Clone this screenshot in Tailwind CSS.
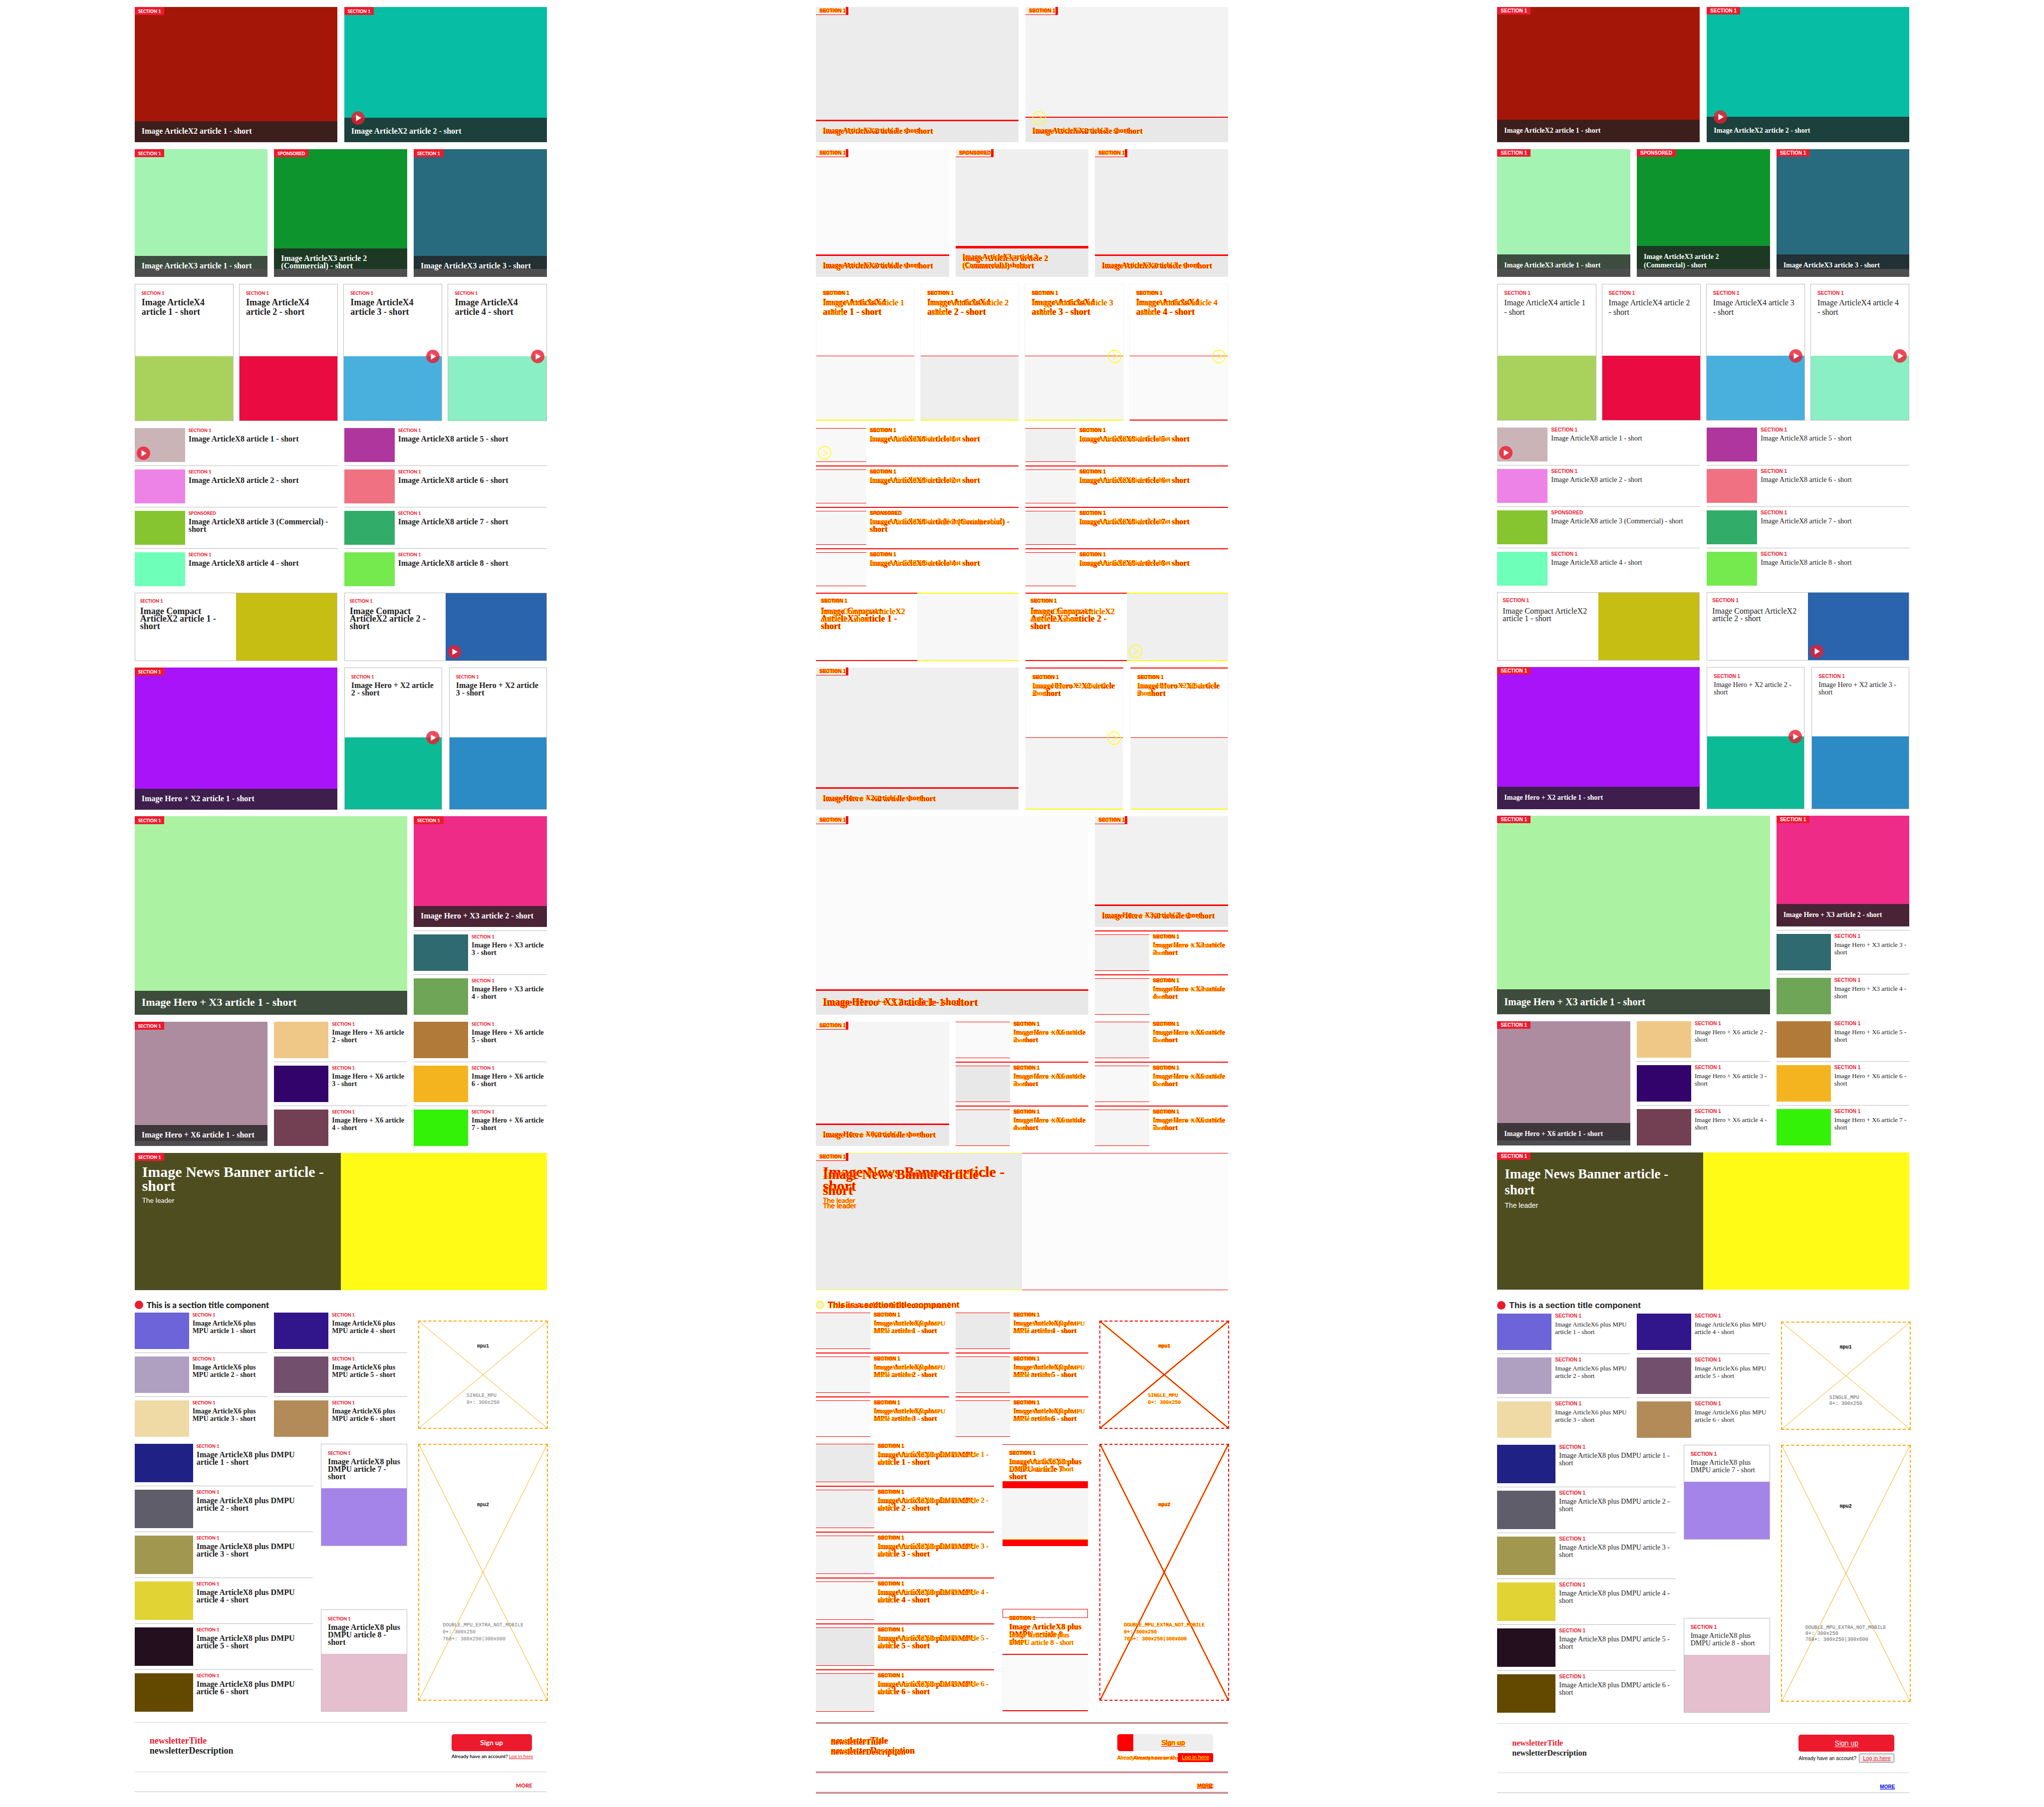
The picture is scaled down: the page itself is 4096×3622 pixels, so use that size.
<!DOCTYPE html>
<html lang="en">
<head>
<meta charset="utf-8">
<title>Edition slices: baseline, difference, current</title>
<script src="https://cdn.jsdelivr.net/npm/@tailwindcss/browser@4"></script>
</head>
<body class="bg-white text-[#222]">
<main id="panels" class="flex w-full items-stretch"></main>

<script>
// Each panel draws the same slices. L: baseline fonts, R: fallback fonts, D: difference of the two.
const NOTE = 'text-[#f00] [text-shadow:1px_0_0_#ff0,-1px_0_0_#ff0]';
const SANS = { L: "font-[Lato,sans-serif]", R: "font-['Liberation_Sans',sans-serif]" };
const SERIF = "font-['Liberation_Serif',serif]";
const LABEL = {
  L: "font-[Lato,sans-serif] font-black text-[9px]",
  R: "font-['Liberation_Sans',sans-serif] font-bold text-[10px]"
};
const TYPE = {
  caption: { L: 'font-bold text-[16px] leading-[15px]', R: 'font-bold text-[14px] leading-[17px]' },
  lead:    { L: 'font-bold text-[22px] leading-[21px]', R: 'font-bold text-[20px] leading-[22px]' },
  tall:    { L: 'font-bold text-[18px] leading-[19px]', R: 'text-[16px] leading-[19px]' },
  compact: { L: 'font-bold text-[18px] leading-[15px]', R: 'text-[16px] leading-[15px]' },
  row:     { L: 'font-bold text-[16px] leading-[15px]', R: 'text-[14px] leading-[15px]' },
  small:   { L: 'font-bold text-[14px] leading-[15px]', R: 'text-[13px] leading-[15px]' },
  banner:  { L: 'font-bold text-[30px] leading-[28px]', R: 'font-bold text-[27px] leading-[32px]' },
  news:    { L: 'font-bold text-[18px] leading-[20px]', R: 'font-bold text-[16px] leading-[20px]' }
};

function panel(m) {
  const D = m === 'D';
  const by = (l, r, d) => m === 'L' ? l : m === 'R' ? r : d;

  const tone = hex => {
    if (!D) return '#' + hex;
    const [r, g, b] = [0, 2, 4].map(i => parseInt(hex.slice(i, i + 2), 16));
    const v = Math.round(255 + (0.299 * r + 0.587 * g + 0.114 * b - 255) * 0.1);
    return `rgb(${v},${v},${v})`;
  };
  const image = (hex, cls, inner = '') => `<div class="${cls}" style="background-color:${tone(hex)}">${inner}</div>`;

  // Both versions share one grid cell in the difference panel.
  const both = (draw, align = 'items-start') => D
    ? `<div class="grid ${align}"><div class="[grid-area:1/1] ${NOTE}">${draw('L')}</div><div class="[grid-area:1/1] ${NOTE}">${draw('R')}</div></div>`
    : draw(m);

  const label = (text = 'Section 1') => both(v => `<p class="${LABEL[v]} uppercase leading-[9px] whitespace-nowrap ${D ? '' : 'text-[#ed1a2e]'}">${text}</p>`);
  const title = (kind, text, align) => both(v => `<h3 class="${SERIF} ${TYPE[kind][v]}">${text}</h3>`, align);

  const tag = (text = 'Section 1') => `<div class="absolute left-0 top-0 ${by('h-4 bg-[#ed1a2e] px-[7px] text-white', 'h-[15px] bg-[#ed1a2e] px-[7px] text-white', 'h-4 border-b border-r-[5px] border-[#f00] bg-[#eee] pl-[7px]')} flex items-center">${both(v => `<p class="${LABEL[v]} uppercase leading-[9px] whitespace-nowrap">${text}</p>`)}</div>`;

  const play = cls => `<svg class="absolute ${cls} size-[27px]" viewBox="0 0 27 27" role="img" aria-label="Video">${D
    ? '<circle cx="13.5" cy="13.5" r="12.7" fill="none" stroke="#ff0" stroke-width="1.5"/><path d="M10 7.5 19 13.5 10 19.5" fill="none" stroke="#ff0" stroke-width="1.5"/>'
    : '<circle cx="13.5" cy="13.5" r="13.5" fill="#ed1a2e" fill-opacity=".8"/><path d="M9.5 7.3V19.7L20 13.5Z" fill="#fff"/>'}</svg>`;

  const caption = (text, kind = 'caption', video = false, deep = false) => `<div class="absolute inset-x-0 bottom-0 ${D ? 'bg-[#e8e8e8]' : 'bg-[#222]/80 text-white'} ${kind === 'lead'
      ? by('pt-[12px] pb-[15px]', 'pt-[14px] pb-[14px]', 'pt-[11px] pb-[15px] border-t-[3px] border-[#f00]')
      : video ? by('pt-[19px] pb-[15px]', 'pt-[19px] pb-[15px]', 'pt-[17px] pb-[15px] border-t-2 border-[#f00]')
      : deep ? by('pt-[12px] pb-[15px]', 'pt-[13px] pb-[15px]', 'pt-[8px] pb-[15px] border-t-[5px] border-[#f00]')
      : by('pt-[12px] pb-[15px]', 'pt-[13px] pb-[15px]', 'pt-[10px] pb-[15px] border-t-[3px] border-[#f00]')} pl-[14px] pr-[24px]">
      ${video ? play('left-[14px] -top-[13px]') : ''}${title(kind, text, 'items-end')}</div>`;

  const hero = (hex, text, o = {}) => `<article class="relative ${o.cls || ''} ${o.strip ? (D ? 'bg-[#eee]' : 'bg-white') : ''}">
      ${image(hex, o.img || 'h-full')}${tag(o.tag)}${caption(text, o.kind, o.video, o.deep)}</article>`;

  // The 2px difference rule hangs 1px below its slot so the rows keep their pitch.
  const rule = D ? '-mb-px h-[2px] border-t-2 border-[#f00]' : 'h-px border-t border-[#bbb]';
  const rowItem = (kind, hex, text, o = {}) => `<article class="flex gap-[7px]">
      ${image(hex, `relative shrink-0 ${o.img} ${D ? 'border-y border-[#f00]' : ''}`, o.video ? play('left-1 bottom-1') : '')}
      <div class="min-w-0 flex-1">${label(o.tag)}<div class="mt-[5px]">${title(kind, text)}</div></div></article>`;
  const rows = (kind, img, items) => `<div class="flex flex-col gap-[7px]">${items.map(i =>
      rowItem(kind, i[0], i[1], { img, ...(i[2] || {}) })).join(`<hr class="${rule}">`)}</div>`;

  const edge = D ? 'border-[#f4f4f4]' : 'border-[#bbb]';
  const card = (kind, hex, text, o) => `<article class="flex flex-col border ${o.edge || edge}">
      <div class="${o.body} pt-[13px] pl-[13px] pr-[11px]">${label()}<div class="mt-[5px]">${title(kind, text)}</div></div>
      ${image(hex, `relative ${o.img}`, o.video ? play('right-1 -top-[13px]') : '')}</article>`;

  const compact = (hex, text, video) => `<article class="flex h-[137px] ${D ? '' : 'border border-[#bbb]'}">
      <div class="w-1/2 pl-[10px] pr-[10px] ${D ? 'pt-[10px] border-y-2 border-[#f00]' : 'pt-[11px]'}">${label()}<div class="mt-[9px]">${title('compact', text)}</div></div>
      ${image(hex, `relative w-1/2 ${D ? 'border-y-2 border-[#ff0]' : ''}`, video ? play('left-1 bottom-1') : '')}</article>`;

  const advert = (name, lines, cls) => `<aside class="relative ml-[9px] flex w-[260px] flex-col items-center justify-around border-2 border-dashed ${D ? 'border-[#f00]' : 'border-[#ffa500]'} font-['Liberation_Mono',monospace] text-[10px] ${cls}">
      <svg class="absolute inset-0 size-full" aria-hidden="true">${D
        ? '<g stroke="#ff0" stroke-width="3"><line x1="0" y1="0" x2="100%" y2="100%"/><line x1="0" y1="100%" x2="100%" y2="0"/></g>' : ''}
        <g stroke="${D ? '#f00' : '#ffa500'}" stroke-width="${D ? '2' : '1'}"><line x1="0" y1="0" x2="100%" y2="100%"/><line x1="0" y1="100%" x2="100%" y2="0"/></g></svg>
      <p class="relative font-bold ${by('leading-[14px]', 'leading-[12px] text-black', 'leading-[14px] ' + NOTE)}">${name}</p>
      <p class="relative ${by('leading-[14px] text-[#777]', 'leading-[12px] text-[#666]', 'leading-[14px] ' + NOTE)}">${lines.join('<br>')}</p></aside>`;

  const dmpuCard = (n, hex) => D
    ? `<article class="border border-[#f4f4f4]">${n === 8 ? '<div class="-mb-[17px] h-[18px] border border-[#f00]"></div>' : ''}
        <div class="${n === 8 ? 'h-[89px]' : 'h-[74px]'} border-t ${n === 8 ? 'border-transparent' : 'border-[#f00]'} pt-[12px] pl-[13px] pr-[11px]">${label()}
          <div class="mt-[5px] grid items-start ${NOTE}"><h3 class="[grid-area:1/1] ${SERIF} ${TYPE.row.L}">Image ArticleX8 plus DMPU article ${n} - short</h3><h3 class="[grid-area:1/1] ${SERIF} ${TYPE.row.R} ${n === 8 ? 'pt-[17px]' : ''}">Image ArticleX8 plus DMPU article ${n} - short</h3></div></div>
        ${n === 8 ? image(hex, 'h-[115px] border-y-2 border-[#f00]') : `<div class="h-[14px] bg-[#f00]"></div>${image(hex, 'h-[102px]')}<div class="h-[14px] border-t border-[#ff0] bg-[#f00]"></div>`}</article>`
    : card('row', hex, `Image ArticleX8 plus DMPU article ${n} - short`, { body: 'pb-[16px]', img: 'h-[115px]' });

  const wide = by('border-[#d3d3d3]', 'border-[#d3d3d3]', 'border-[#933]');

  return `<section aria-label="${by('Baseline', 'Current', 'Difference')}" class="w-1/3 pt-[14px] ${by('border-b border-[#aaa]', '', 'border-b border-[#f00]')}">
  <div class="mx-auto max-w-[826px]">
    <div class="grid grid-cols-2 gap-[14px]">
      ${hero('a41607', 'Image ArticleX2 article 1 - short', { cls: 'h-[271px]' })}
      ${hero('07bda4', 'Image ArticleX2 article 2 - short', { cls: 'h-[271px]', video: true })}
    </div>
    <div class="mt-[14px] grid grid-cols-3 gap-[13px]">
      ${hero('a5f3b2', 'Image ArticleX3 article 1 - short', { cls: 'h-[256px]', img: 'h-[240px]', strip: true })}
      ${hero('0d942d', 'Image ArticleX3 article 2 (Commercial) - short', { cls: 'h-[256px]', img: 'h-[240px]', strip: true, tag: 'Sponsored', deep: true })}
      ${hero('286b7e', 'Image ArticleX3 article 3 - short', { cls: 'h-[256px]', img: 'h-[240px]', strip: true })}
    </div>
    <div class="mt-[14px] grid grid-cols-4 gap-[11px]">
      ${['a9d25d', 'ea0b41', '49b0dd', '8aefc4'].map((c, i) => card('tall', c, `Image ArticleX4 article ${i + 1} - short`,
        { body: by('h-[144px]', 'h-[143px]', 'h-[143px]'), img: D ? 'h-[130px] border-t border-t-[#f00] border-b-2 ' + (i < 3 ? 'border-b-[#ff0]' : 'border-b-[#f00]') : 'h-[129px]', video: i > 1 })).join('')}
    </div>
    <div class="mt-[14px] grid grid-cols-2 gap-[14px]">
      ${rows('row', 'h-[68px] w-[101px]', [['cab4b7', 'Image ArticleX8 article 1 - short', { video: true }], ['ed83e7', 'Image ArticleX8 article 2 - short'], ['87c530', 'Image ArticleX8 article 3 (Commercial) - short', { tag: 'Sponsored' }], ['6effb9', 'Image ArticleX8 article 4 - short']])}
      ${rows('row', 'h-[68px] w-[101px]', [['ae369c', 'Image ArticleX8 article 5 - short'], ['f07282', 'Image ArticleX8 article 6 - short'], ['32ac69', 'Image ArticleX8 article 7 - short'], ['75ea4f', 'Image ArticleX8 article 8 - short']])}
    </div>
    <div class="mt-[13px] grid grid-cols-2 gap-[14px]">
      ${compact('c7be13', 'Image Compact ArticleX2 article 1 - short')}
      ${compact('2964ad', 'Image Compact ArticleX2 article 2 - short', true)}
    </div>
    <div class="mt-[13px] grid grid-cols-2 gap-[14px]">
      ${hero('a913fa', 'Image Hero + X2 article 1 - short', { cls: 'h-[285px]' })}
      <div class="grid grid-cols-2 gap-[14px]">
        ${['0cbb96', '2c8ac4'].map((c, i) => card('row', c, `Image Hero + X2 article ${i + 2} - short`,
          { body: by('h-[139px]', 'h-[138px]', 'h-[138px]'), edge: D ? 'border-y-2 border-x-[#f4f4f4] border-t-[#f00] border-b-[#ff0]' : '', img: 'flex-1 ' + (D ? 'border-t border-[#f00]' : ''), video: i === 0 })).join('')}
      </div>
    </div>
    <div class="mt-[13px] grid grid-cols-3 gap-[13px]">
      ${hero('abf3a3', 'Image Hero + X3 article 1 - short', { cls: 'col-span-2', kind: 'lead' })}
      <div class="flex flex-col gap-[7px]">
        ${hero('ee2c88', 'Image Hero + X3 article 2 - short', { cls: 'h-[222px]' })}
        <hr class="${rule}">
        ${rows('small', 'h-[73px] w-[109px]', [['2e6a70', 'Image Hero + X3 article 3 - short'], ['6fa556', 'Image Hero + X3 article 4 - short']])}
      </div>
    </div>
    <div class="mt-[14px] grid grid-cols-3 gap-[13px]">
      ${hero('ad8ca0', 'Image Hero + X6 article 1 - short', { img: 'h-[239px]', strip: true })}
      ${rows('small', 'h-[73px] w-[109px]', [['efc887', 'Image Hero + X6 article 2 - short'], ['31036b', 'Image Hero + X6 article 3 - short'], ['733f53', 'Image Hero + X6 article 4 - short']])}
      ${rows('small', 'h-[73px] w-[109px]', [['b27a38', 'Image Hero + X6 article 5 - short'], ['f4b420', 'Image Hero + X6 article 6 - short'], ['33f208', 'Image Hero + X6 article 7 - short']])}
    </div>
    <article class="relative mt-[14px] flex h-[275px]">
      <div class="w-1/2 px-[14px] ${by('bg-[#4e4d20] border border-[#4d4d2f] pt-[23px] text-white', 'bg-[#4e4d20] border border-[#4d4d2f] pt-[26px] text-white', 'bg-[#ebebeb] pt-[23px] border-y border-[#ff0]')}">
        ${both(v => `<div class="${D && v === 'R' ? 'pt-[3px]' : ''}"><h2 class="${SERIF} ${TYPE.banner[v]}">Image News Banner article - short</h2>
          <p class="${SANS[v]} mt-[6px] text-[14px] leading-[18px]">The leader</p></div>`)}
      </div>
      ${image('fffb17', D ? 'w-1/2 border-y border-[#f00]' : 'w-1/2')}${tag()}
    </article>

    <div class="${by('mt-[21px] mb-[7px]', 'mt-[23px] mb-[8px]', 'mt-[21px] mb-[7px]')} flex h-[17px] items-center gap-[7px]">
      <span class="size-[17px] shrink-0 rounded-full ${D ? 'border-2 border-[#ff0] bg-[#eee]' : 'bg-[#ed1a2e]'}"></span>
      ${both(v => `<h2 class="${SANS[v]} ${v === 'L' ? 'font-black' : 'font-bold'} text-[17px] leading-[17px] whitespace-nowrap">This is a section title component</h2>`)}
    </div>
    <div class="grid grid-cols-3 gap-[13px]">
      ${rows('small', 'h-[73px] w-[109px]', ['6c64d8', 'af9fc0', 'efdaa6'].map((c, i) => [c, `Image ArticleX6 plus MPU article ${i + 1} - short`]))}
      ${rows('small', 'h-[73px] w-[109px]', ['31158a', '734f6e', 'b38b59'].map((c, i) => [c, `Image ArticleX6 plus MPU article ${i + 4} - short`]))}
      ${advert('mpu1', ['SINGLE_MPU', '0+: 300x250'], 'my-[16px]')}
    </div>
    <div class="mt-[14px] grid grid-cols-3 gap-[13px]">
      <div class="col-span-2 flex gap-[16px]">
        <div class="flex-1">${rows('row', 'h-[77px] w-[117px]', ['1f2185', '605d6a', 'a1974f', 'e1d334', '230f1e', '634800'].map((c, i) => [c, `Image ArticleX8 plus DMPU article ${i + 1} - short`]))}</div>
        <div class="flex w-[173px] flex-col justify-between">${dmpuCard(7, 'a584e9')}${dmpuCard(8, 'e5bfce')}</div>
      </div>
      ${advert('mpu2', ['DOUBLE_MPU_EXTRA_NOT_MOBILE', '0+: 300x250', '768+: 300x250|300x600'], 'h-[515px]')}
    </div>

    <div class="mt-[21px] flex justify-between ${D ? 'border-y-[3px] border-double' : 'border-y'} ${wide} px-[30px] ${by('h-[100px] pt-[23px]', 'h-[100px] pt-[22px]', 'h-[102px] pt-[21px]')}">
      <div class="${by('pt-[3px]', 'pt-[7px]', 'pt-[3px]')}">${both(v => `<div class="${D && v === 'R' ? 'pt-[3px]' : ''}">
        <h3 class="${SERIF} ${TYPE.news[v]} ${D ? '' : 'text-[#ed1a2e]'}">newsletterTitle</h3>
        <p class="${SERIF} ${TYPE.news[v]}">newsletterDescription</p></div>`)}</div>
      <div class="flex flex-col ${by('w-[161px]', 'w-[192px]', 'w-[192px]')}">
        <button type="button" class="h-[34px] w-full rounded-[5px] ${D ? 'border-l-[32px] border-[#f00] bg-[#eee]' : 'bg-[#ed1a2e] text-white'} text-[14px] leading-[18px]">${both(v => `<span class="${SANS[v]} ${v === 'L' ? 'font-bold' : 'underline underline-offset-2'}">Sign up</span>`)}</button>
        ${by(
          `<p class="${SANS.L} mt-[4px] whitespace-nowrap text-[10px] leading-[13px] font-bold">Already have an account? <a href="#" class="font-normal text-[#ed1a2e] underline">Log in here</a></p>`,
          `<div class="${SANS.R} mt-[4px] flex items-center justify-between whitespace-nowrap text-[10px] text-black"><span>Already have an account?</span><button type="button" class="h-[18px] w-[71px] rounded-[2px] border border-[#777] bg-[#efefef] text-[11px] leading-[15px] text-[#ed1a2e] underline">Log in here</button></div>`,
          `<div class="mt-[4px] flex items-center justify-between whitespace-nowrap text-[10px]"><div class="grid ${NOTE}"><span class="[grid-area:1/1] ${SANS.R}">Already have an account?</span><span class="[grid-area:1/1] pl-8 w-[118px] ${SANS.L} font-bold">Already have an account?</span></div><a href="#" class="${SANS.R} relative h-[18px] w-[71px] rounded-[2px] bg-[#f00] text-center text-[11px] leading-[17px] text-[#ff0] underline">Log in here</a></div>`)}
      </div>
    </div>
    <div class="flex items-center justify-end ${by('h-[40px] border-b border-[#bbb] pt-[14px]', 'h-[40px] border-b border-[#bbb] pt-[16px]', 'h-[41px] border-b-[3px] border-double border-[#933] pt-[14px]')} pr-[29px]">
      ${both(v => `<a href="#" class="${SANS[v]} block leading-[12px] ${v === 'L' ? 'text-[11px] font-black' : 'text-[10px] font-bold underline'} ${by('text-[#ed1a2e]', 'text-[#00e]', '')}">MORE</a>`)}
    </div>
    <div class="h-[28px]"></div>
  </div></section>`;
}

document.getElementById('panels').innerHTML = ['L', 'D', 'R'].map(panel).join('');
</script>
</body>
</html>
